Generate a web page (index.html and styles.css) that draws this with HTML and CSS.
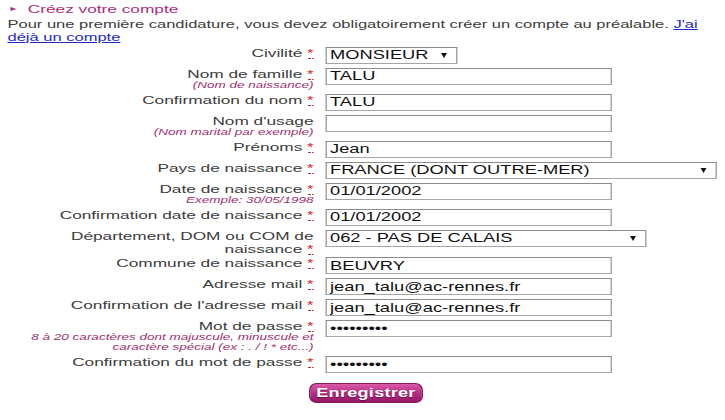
FILE: index.html
```html
<!doctype html>
<html>
<head>
  <meta charset='utf-8'>
  <title>Créez votre compte</title>
  <link rel="stylesheet" href="styles.css">
</head>
<body>
<div class='page'>
  <h2 class='title'><span class='tri'></span>Créez votre compte</h2>
  <p class='intro'>Pour une première candidature, vous devez obligatoirement créer un compte au préalable. <a href='#'>J'ai</a><br><a href='#'>déjà un compte</a></p>

  <form class='signup'>
    <div class='lbl'><label>Civilité <abbr class='req' title='obligatoire'>*</abbr></label></div>
    <div class='field'><span class='sel sel-civ'><select><option>MONSIEUR</option><option>MADAME</option></select></span></div>

    <div class='lbl'><label>Nom de famille <abbr class='req' title='obligatoire'>*</abbr></label><span class='hint'>(Nom de naissance)</span></div>
    <div class='field'><input type='text' value='TALU'></div>

    <div class='lbl'><label>Confirmation du nom <abbr class='req' title='obligatoire'>*</abbr></label></div>
    <div class='field'><input type='text' value='TALU'></div>

    <div class='lbl'><label>Nom d'usage</label><span class='hint'>(Nom marital par exemple)</span></div>
    <div class='field'><input type='text' value=''></div>

    <div class='lbl'><label>Prénoms <abbr class='req' title='obligatoire'>*</abbr></label></div>
    <div class='field'><input type='text' value='Jean'></div>

    <div class='lbl'><label>Pays de naissance <abbr class='req' title='obligatoire'>*</abbr></label></div>
    <div class='field'><span class='sel sel-pays'><select><option>FRANCE (DONT OUTRE-MER)</option></select></span></div>

    <div class='lbl'><label>Date de naissance <abbr class='req' title='obligatoire'>*</abbr></label><span class='hint'>Exemple: 30/05/1998</span></div>
    <div class='field'><input type='text' value='01/01/2002'></div>

    <div class='lbl'><label>Confirmation date de naissance <abbr class='req' title='obligatoire'>*</abbr></label></div>
    <div class='field'><input type='text' value='01/01/2002'></div>

    <div class='lbl lbl-2l'><label>Département, DOM ou COM de<br>naissance <abbr class='req' title='obligatoire'>*</abbr></label></div>
    <div class='field'><span class='sel sel-dep'><select><option>062 - PAS DE CALAIS</option></select></span></div>

    <div class='lbl'><label>Commune de naissance <abbr class='req' title='obligatoire'>*</abbr></label></div>
    <div class='field'><input type='text' value='BEUVRY'></div>

    <div class='lbl'><label>Adresse mail <abbr class='req' title='obligatoire'>*</abbr></label></div>
    <div class='field'><input type='text' value='jean_talu@ac-rennes.fr'></div>

    <div class='lbl'><label>Confirmation de l'adresse mail <abbr class='req' title='obligatoire'>*</abbr></label></div>
    <div class='field'><input type='text' value='jean_talu@ac-rennes.fr'></div>

    <div class='lbl'><label>Mot de passe <abbr class='req' title='obligatoire'>*</abbr></label><span class='hint'>8 à 20 caractères dont majuscule, minuscule et caractère spécial (ex : . / ! * etc...)</span></div>
    <div class='field'><input type='password' value='Azerty12!'></div>

    <div class='lbl'><label>Confirmation du mot de passe <abbr class='req' title='obligatoire'>*</abbr></label></div>
    <div class='field'><input type='password' value='Azerty12!'></div>
  </form>

  <div class='actions'><button type='button' class='btn'>Enregistrer</button></div>
</div>
</body>
</html>
```

FILE: styles.css
```css
*{margin:0;padding:0;box-sizing:border-box;}
html,body{overflow:hidden;background:#fff;}
body{font-family:"Liberation Sans",Arial,sans-serif;color:#3c3c3c;}
/* la capture est étirée en largeur : on garde le rapport */
.page{width:483px;padding:2px 0 0 5px;transform:scaleX(1.5);transform-origin:0 0;}

.title{font-size:11.5px;font-weight:normal;line-height:14px;color:#a8307a;display:flex;align-items:center;}
.tri{width:0;height:0;border-top:2.5px solid transparent;border-bottom:2.5px solid transparent;border-left:4px solid #a8307a;margin:0 8px 0 1.5px;}

.intro{font-size:11px;line-height:12.6px;margin-top:2px;color:#3c3c3c;}
.intro a{color:#1f2bbf;text-decoration:underline;}

.signup{display:grid;grid-template-columns:204px 1fr;column-gap:8px;row-gap:4px;margin-top:3.5px;align-items:start;}
.lbl{text-align:right;}
.lbl label{display:block;font-size:11.5px;line-height:12px;color:#3c3c3c;}
.lbl-2l{margin-bottom:-3px;}
.lbl-2l label{line-height:13.2px;}
.hint{display:block;font-size:9px;line-height:10px;font-style:italic;color:#a0306e;}
.req{display:inline-block;line-height:9px;color:#d42020;font-size:11px;text-decoration:none;border-bottom:1px dotted #b03030;}

.field input,.field select{display:block;height:17px;border:1px solid #a6a6a6;border-top-color:#8c8c8c;background:#fff;font-family:"Liberation Sans",Arial,sans-serif;font-size:12.2px;color:#111;padding:0 2px;outline:none;}
.field input{width:190.7px;}
.field select{appearance:none;-webkit-appearance:none;border-radius:0;width:100%;}
.sel{display:block;position:relative;}
.sel::after{content:"";position:absolute;top:6px;right:7px;border-left:2.3px solid transparent;border-right:2.3px solid transparent;border-top:5px solid #111;}
.sel-civ{width:88px;}
.sel-pays{width:261px;}
.sel-dep{width:214px;}

.actions{text-align:center;margin-top:10px;}
.btn{width:75.3px;height:20px;border:1px solid #8a1a60;border-radius:5px/7px;background:linear-gradient(#d85aa8,#b82f86 50%,#961866);color:#fff;font-family:"Liberation Sans",Arial,sans-serif;font-weight:bold;font-size:12px;letter-spacing:.2px;text-shadow:0 1px 1px rgba(0,0,0,.45);cursor:pointer;}
```
